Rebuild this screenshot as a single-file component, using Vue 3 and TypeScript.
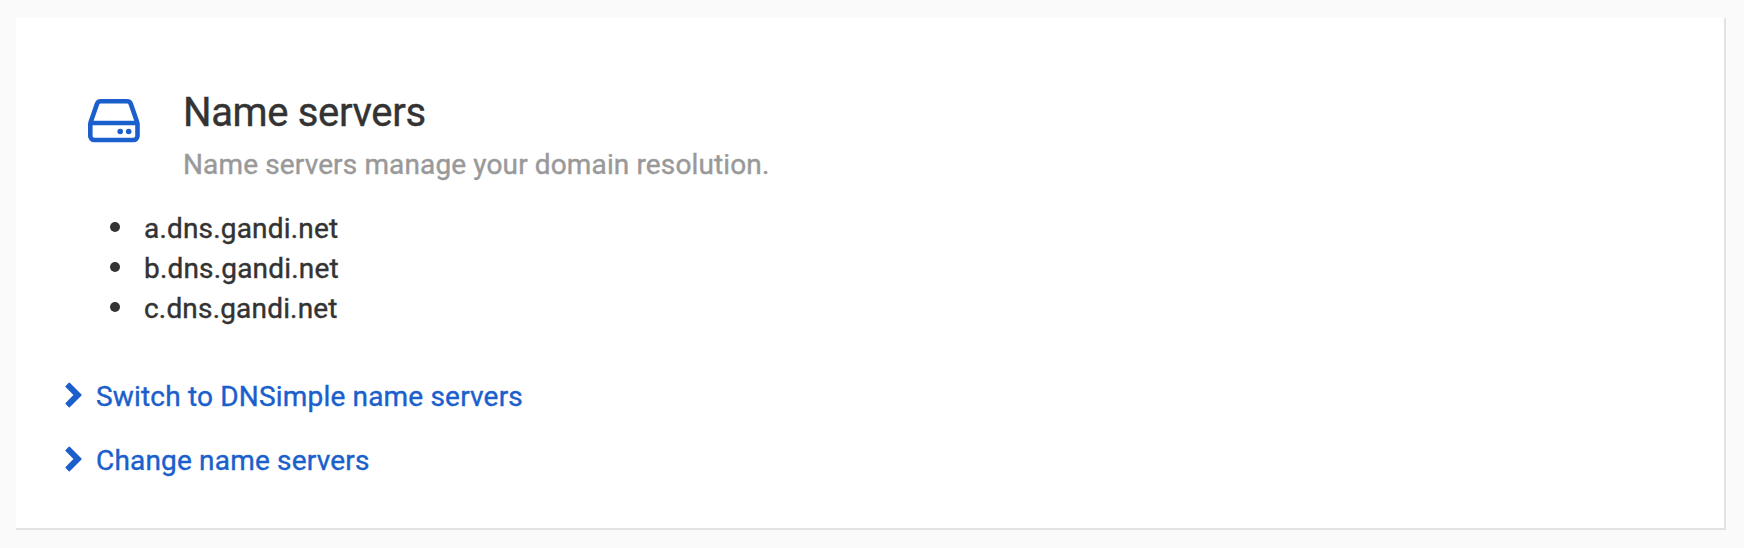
<script setup lang="ts">
const servers: string[] = ['a.dns.gandi.net', 'b.dns.gandi.net', 'c.dns.gandi.net']
const actions: string[] = ['Switch to DNSimple name servers', 'Change name servers']
</script>

<template>
  <section class="card">
    <header class="head">
      <svg class="disk" width="52" height="44" viewBox="0 0 52 44" fill="none" stroke="currentColor" stroke-width="4.600" aria-hidden="true">
        <path d="M2.300 25.500V37a4 4 0 0 0 4 4H45.500a4 4 0 0 0 4-4V25.500a8 8 0 0 0-.5-2.800L42.800 4.900A4 4 0 0 0 39 2.300H12.800A4 4 0 0 0 9 4.900L2.800 22.700A8 8 0 0 0 2.300 25.500Z" />
        <path d="M3 24H49" />
        <circle cx="32.200" cy="32.500" r="2.800" fill="currentColor" stroke="none" />
        <circle cx="40.700" cy="32.500" r="2.800" fill="currentColor" stroke="none" />
      </svg>
      <div>
        <h2 class="title">Name servers</h2>
        <p class="subtitle">Name servers manage your domain resolution.</p>
      </div>
    </header>
    <ul class="servers">
      <li v-for="server in servers" :key="server"><span class="dot"></span>{{ server }}</li>
    </ul>
    <nav class="actions">
      <a v-for="action in actions" :key="action" class="action">
        <svg class="chevron" width="17" height="26" viewBox="0 0 17 26" fill="currentColor" stroke="currentColor" stroke-width="1.400" stroke-linejoin="round" aria-hidden="true">
          <path d="M4.300 1.200L16 13L4.300 24.800L1.100 21.500L9.400 13L1.100 4.500Z" />
        </svg>
        <span>{{ action }}</span>
      </a>
    </nav>
  </section>
</template>

<style>
body {
  background: #fafafa;
}
</style>

<style scoped>
.card {
  box-sizing: border-box;
  width: 1710px;
  height: 512px;
  margin: 18px 0 0 16px;
  padding: 67px 48px 0;
  border-right: 2px solid #e2e2e2;
  border-bottom: 2px solid #e2e2e2;
  background: #fff;
  color: #333;
  font: 28px/40px Roboto, sans-serif;
  letter-spacing: 0.18px;
  -webkit-text-stroke: 0.4px currentColor;
}
.head {
  display: flex;
  gap: 43px;
  padding-left: 24px;
}
.disk {
  flex: none;
  margin-top: 14px;
  color: #1b5fcc;
}
.title {
  margin: 0;
  font-size: 40px;
  font-weight: 400;
  line-height: 56px;
  letter-spacing: -0.34px;
}
.subtitle {
  margin: 4px 0 0;
  color: #999;
  letter-spacing: 0.13px;
}
.servers {
  margin: 24px 0 0;
  padding: 0 0 0 46px;
  list-style: none;
}
.servers li {
  display: flex;
}
.dot {
  width: 10px;
  height: 10px;
  margin: 13px 24px 0 0;
  border-radius: 50%;
  background: #333;
}
.actions {
  display: flex;
  flex-direction: column;
  gap: 24px;
  margin-top: 48px;
}
.action {
  display: flex;
  gap: 14px;
  padding-left: 1px;
  color: #1b5fcc;
}
.chevron {
  flex: none;
  margin-top: 5px;
}
</style>
